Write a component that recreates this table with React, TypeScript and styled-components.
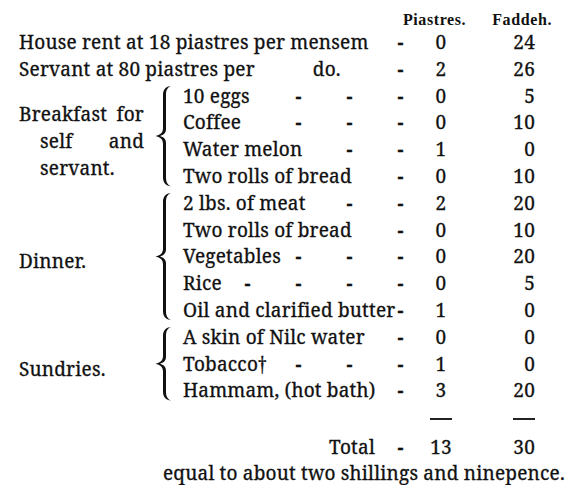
import { FC } from 'react';
import styled, { createGlobalStyle } from 'styled-components';

const ROW = 26.8;

const GlobalStyle = createGlobalStyle`
  body {
    margin: 0;
    background: #fff;
    overflow: hidden;
  }
`;

const Page = styled.div`
  box-sizing: border-box;
  width: 579px;
  padding: 11px 0 0 19px;
  font-family: 'Noto Serif', 'Liberation Serif', serif;
  font-size: 19px;
  letter-spacing: 0.2px;
  color: #111;
  -webkit-text-stroke: 0.3px #111;
`;

const Header = styled.div`
  display: flex;
  justify-content: flex-end;
  gap: 26px;
  height: 18px;
  padding-right: 27px;
  font-family: 'Liberation Serif', serif;
  font-weight: bold;
  font-size: 16px;
  line-height: 17px;
  letter-spacing: 0.6px;
  -webkit-text-stroke: 0;
`;

const Row = styled.div<{ $lead: number; $height?: number }>`
  display: grid;
  grid-template-columns: ${(p) => p.$lead}px 51px 30px 96px;
  align-items: center;
  height: ${(p) => p.$height ?? ROW}px;
  line-height: ${ROW}px;
  white-space: nowrap;
`;

const Desc = styled.div<{ $end?: boolean }>`
  display: flex;
  justify-content: ${(p) => (p.$end ? 'flex-end' : 'flex-start')};
  min-width: 0;
`;

const DescText = styled.span`
  flex: 1;
  min-width: 0;
`;

const Ditto = styled.span`
  padding-left: 58px;
`;

const Filler = styled.span`
  flex: 0 0 51px;
  text-align: center;
  font-weight: bold;
`;

const DashCell = styled.span`
  text-align: center;
  font-weight: bold;
`;

const Piastres = styled.span`
  display: flex;
  justify-content: center;
`;

const Faddeh = styled.span`
  display: flex;
  justify-content: flex-end;
  padding-right: 17px;
`;

const Rule = styled.span`
  display: block;
  width: 22px;
  height: 1.5px;
  background: #222;
`;

const Group = styled.div`
  display: grid;
  grid-template-columns: 131px 33px 1fr;
`;

const Label = styled.div`
  display: flex;
  flex-direction: column;
  justify-content: center;
  padding: 10px 6px 0 0;
  line-height: ${ROW}px;
  white-space: nowrap;
`;

const LabelLine = styled.div<{ $indent?: boolean }>`
  display: flex;
  justify-content: space-between;
  gap: 8px;
  padding-left: ${(p) => (p.$indent ? 21 : 0)}px;
`;

const BraceCell = styled.div`
  display: flex;
  align-items: center;
  padding-left: 4px;
`;

const Note = styled.p`
  margin: 0;
  padding-left: 144px;
  line-height: 24px;
  white-space: nowrap;
`;

type Item = { text: string; fill: number; p: number; f: number };

type GroupData = { label: string[][]; items: Item[] };

const groups: GroupData[] = [
  {
    label: [['Breakfast', 'for'], ['self', 'and'], ['servant.']],
    items: [
      { text: '10 eggs', fill: 2, p: 0, f: 5 },
      { text: 'Coffee', fill: 2, p: 0, f: 10 },
      { text: 'Water melon', fill: 1, p: 1, f: 0 },
      { text: 'Two rolls of bread', fill: 0, p: 0, f: 10 },
    ],
  },
  {
    label: [['Dinner.']],
    items: [
      { text: '2 lbs. of meat', fill: 1, p: 2, f: 20 },
      { text: 'Two rolls of bread', fill: 0, p: 0, f: 10 },
      { text: 'Vegetables', fill: 2, p: 0, f: 20 },
      { text: 'Rice', fill: 3, p: 0, f: 5 },
      { text: 'Oil and clarified butter', fill: 0, p: 1, f: 0 },
    ],
  },
  {
    label: [['Sundries.']],
    items: [
      { text: 'A skin of Nilc water', fill: 0, p: 0, f: 0 },
      { text: 'Tobacco†', fill: 2, p: 1, f: 0 },
      { text: 'Hammam, (hot bath)', fill: 0, p: 3, f: 20 },
    ],
  },
];

const Brace: FC<{ h: number }> = ({ h }) => {
  const m = h / 2;
  const d = [
    `M 17 1`,
    `C 12 1.5, 9 4, 9 10`,
    `L 9 ${m - 8}`,
    `C 9 ${m - 3}, 6 ${m - 1}, 1.5 ${m}`,
    `C 6 ${m + 1}, 9 ${m + 3}, 9 ${m + 8}`,
    `L 9 ${h - 10}`,
    `C 9 ${h - 4}, 12 ${h - 1.5}, 17 ${h - 1}`,
    `C 13.5 ${h - 2.5}, 12 ${h - 5}, 12 ${h - 10}`,
    `L 12 ${m + 7}`,
    `C 12 ${m + 3}, 9.5 ${m + 1}, 6 ${m}`,
    `C 9.5 ${m - 1}, 12 ${m - 3}, 12 ${m - 7}`,
    `L 12 10`,
    `C 12 5, 13.5 2.5, 17 1 Z`,
  ].join(' ');
  return (
    <svg width={19} height={h} viewBox={`0 0 19 ${h}`}>
      <path d={d} fill="#111" />
    </svg>
  );
};

const Fillers: FC<{ n: number }> = ({ n }) => (
  <>
    {Array.from({ length: n }, (_, i) => (
      <Filler key={i}>-</Filler>
    ))}
  </>
);

const App: FC = () => (
  <Page>
    <GlobalStyle />
    <Header>
      <span>Piastres.</span>
      <span>Faddeh.</span>
    </Header>

    <Row $lead={356}>
      <Desc>
        <DescText>House rent at 18 piastres per mensem</DescText>
      </Desc>
      <DashCell>-</DashCell>
      <Piastres>0</Piastres>
      <Faddeh>24</Faddeh>
    </Row>
    <Row $lead={356}>
      <Desc>
        <DescText>
          Servant at 80 piastres per<Ditto>do.</Ditto>
        </DescText>
      </Desc>
      <DashCell>-</DashCell>
      <Piastres>2</Piastres>
      <Faddeh>26</Faddeh>
    </Row>

    {groups.map((g) => (
      <Group key={g.label[0][0]}>
        <Label>
          {g.label.map((words, i) => (
            <LabelLine key={i} $indent={i > 0}>
              {words.map((w) => (
                <span key={w}>{w}</span>
              ))}
            </LabelLine>
          ))}
        </Label>
        <BraceCell>
          <Brace h={g.items.length * ROW - 5} />
        </BraceCell>
        <div>
          {g.items.map((it) => (
            <Row $lead={192} key={it.text + it.f}>
              <Desc>
                <DescText>{it.text}</DescText>
                <Fillers n={it.fill} />
              </Desc>
              <DashCell>-</DashCell>
              <Piastres>{it.p}</Piastres>
              <Faddeh>{it.f}</Faddeh>
            </Row>
          ))}
        </div>
      </Group>
    ))}

    <Row $lead={356} $height={30}>
      <span />
      <span />
      <Piastres>
        <Rule />
      </Piastres>
      <Faddeh>
        <Rule />
      </Faddeh>
    </Row>
    <Row $lead={356}>
      <Desc $end>
        <span>Total</span>
      </Desc>
      <DashCell>-</DashCell>
      <Piastres>13</Piastres>
      <Faddeh>30</Faddeh>
    </Row>
    <Note>equal to about two shillings and ninepence.</Note>
  </Page>
);

export default App;
